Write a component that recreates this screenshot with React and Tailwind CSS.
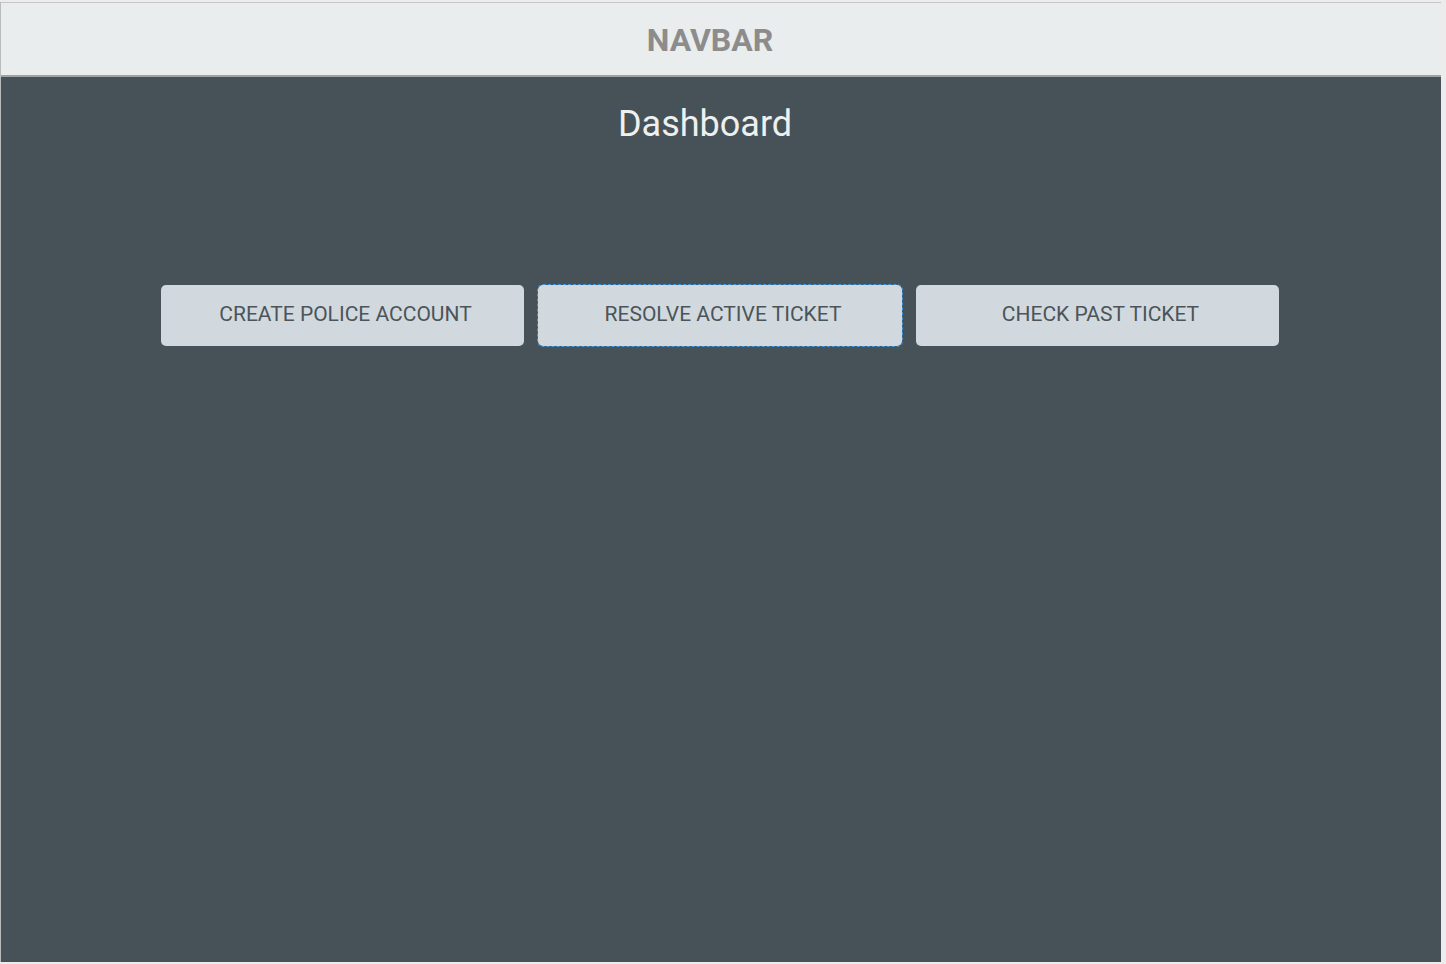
import React from "react";

const actions = ["CREATE POLICE ACCOUNT", "RESOLVE ACTIVE TICKET", "CHECK PAST TICKET"];

export default function App() {
  return (
    <div className="min-h-screen bg-[#ececec] pt-[2px]" style={{ fontFamily: "Roboto, 'Liberation Sans', sans-serif" }}>
      <div className="w-[1441px] h-[960px] flex flex-col border-l border-[#b9bcbd]">
        <nav className="h-[75px] bg-[#e9edee] border-t border-b-2 border-t-[#c4c6c7] border-b-[#9ea3a4] flex items-center justify-center">
          <span className="text-[32px] font-bold text-[#8c8c8c] pr-[22px] pt-[2px]">NAVBAR</span>
        </nav>
        <main className="flex-1 bg-[#465257] flex flex-col items-center">
          <h1 className="mt-[24px] text-[36px] text-[#eef0f0] leading-[46px] pr-[32px]">Dashboard</h1>
          <div className="mt-[138px] flex gap-[14px] pr-[2px]">
            {actions.map((label, i) => (
              <button
                key={label}
                className={`w-[363px] h-[61px] rounded-[5px] bg-[#d1d9de] text-[21px] text-[#4b5559] pl-[6px] pb-[2px] ${
                  i === 1 ? "outline-1 outline-dashed outline-[#3c95e0] w-[364px]" : ""
                }`}
              >
                {label}
              </button>
            ))}
          </div>
        </main>
      </div>
    </div>
  );
}
